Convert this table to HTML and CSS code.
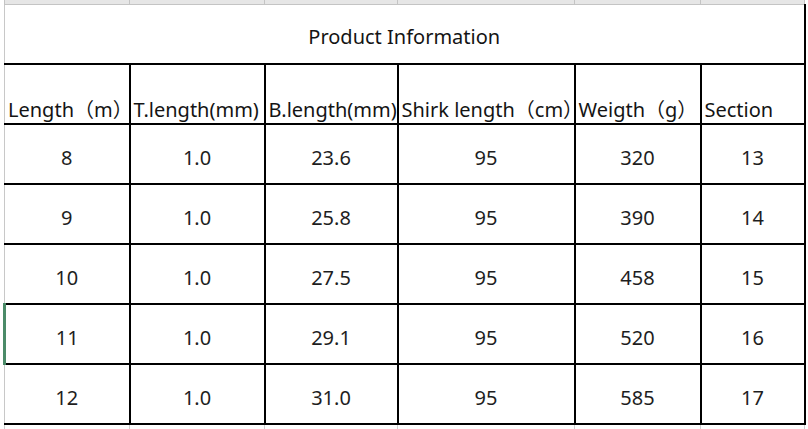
FILE: index.html
```html
<!DOCTYPE html>
<html>
<head>
<meta charset="utf-8">
<link rel="stylesheet" href="styles.css">
</head>
<body>
<div class="sheet">
<table class="grid">
  <colgroup>
    <col class="c1"><col class="c2"><col class="c3"><col class="c4"><col class="c5"><col class="c6">
  </colgroup>
  <tr class="band"><td></td><td></td><td></td><td></td><td></td><td></td></tr>
  <tr class="title-row"><td class="title" colspan="6">Product Information</td></tr>
  <tr class="head-row">
    <td class="first">Length（m）</td>
    <td>T.length(mm)</td>
    <td>B.length(mm)</td>
    <td>Shirk length（cm）</td>
    <td>Weigth（g）</td>
    <td>Section</td>
  </tr>
  <tr class="data-row"><td class="first">8</td><td>1.0</td><td>23.6</td><td>95</td><td>320</td><td>13</td></tr>
  <tr class="data-row"><td class="first">9</td><td>1.0</td><td>25.8</td><td>95</td><td>390</td><td>14</td></tr>
  <tr class="data-row"><td class="first">10</td><td>1.0</td><td>27.5</td><td>95</td><td>458</td><td>15</td></tr>
  <tr class="data-row"><td class="first active">11</td><td>1.0</td><td>29.1</td><td>95</td><td>520</td><td>16</td></tr>
  <tr class="data-row"><td class="first">12</td><td>1.0</td><td>31.0</td><td>95</td><td>585</td><td>17</td></tr>
  <tr class="foot"><td></td><td></td><td></td><td></td><td></td><td></td></tr>
</table>
</div>
</body>
</html>
```

FILE: styles.css
```css
html, body {
  margin: 0;
  padding: 0;
  background: #ffffff;
}
body {
  width: 808px;
  height: 429px;
  overflow: hidden;
  font-family: "Noto Sans", "Noto Sans CJK SC", sans-serif;
  color: #141414;
}
.sheet {
  padding-left: 3px;
}
.grid {
  border-collapse: collapse;
  table-layout: fixed;
  width: 802px;
}
.c1 { width: 125px; }
.c2 { width: 135px; }
.c3 { width: 133px; }
.c4 { width: 177px; }
.c5 { width: 126px; }
.c6 { width: 104px; }
.grid td {
  padding: 0;
  border: 2px solid #000;
  white-space: nowrap;
  overflow: visible;
}
.grid td.first {
  border-left: 1px solid #c8c8c8;
}
.band td {
  height: 4px;
  background: #e6e6e6;
  border-top: none;
  border-left: 1px solid #c4c4c4;
  border-right: 1px solid #c4c4c4;
  border-bottom: 1px solid #c4c4c4;
}
.title-row .title {
  height: 54px;
  text-align: center;
  vertical-align: middle;
  font-size: 20px;
  border-top: 1px solid #c4c4c4;
  border-left: 1px solid #c8c8c8;
  padding-top: 4px;
}
.head-row td {
  height: 55px;
  font-size: 20px;
  text-align: left;
  vertical-align: bottom;
  padding: 0 0 3px 3px;
  line-height: 20px;
}
.data-row td {
  height: 52px;
  font-size: 20px;
  text-align: center;
  vertical-align: middle;
  padding-top: 6px;
  color: #1e1e1e;
}
.grid td.active {
  border-left: 3px solid #4b8b68;
}
.foot td {
  height: 4px;
  border-top: 2px solid #000;
  border-bottom: none;
  border-left: 1px solid #d0d0d0;
  border-right: 1px solid #d0d0d0;
}
```
